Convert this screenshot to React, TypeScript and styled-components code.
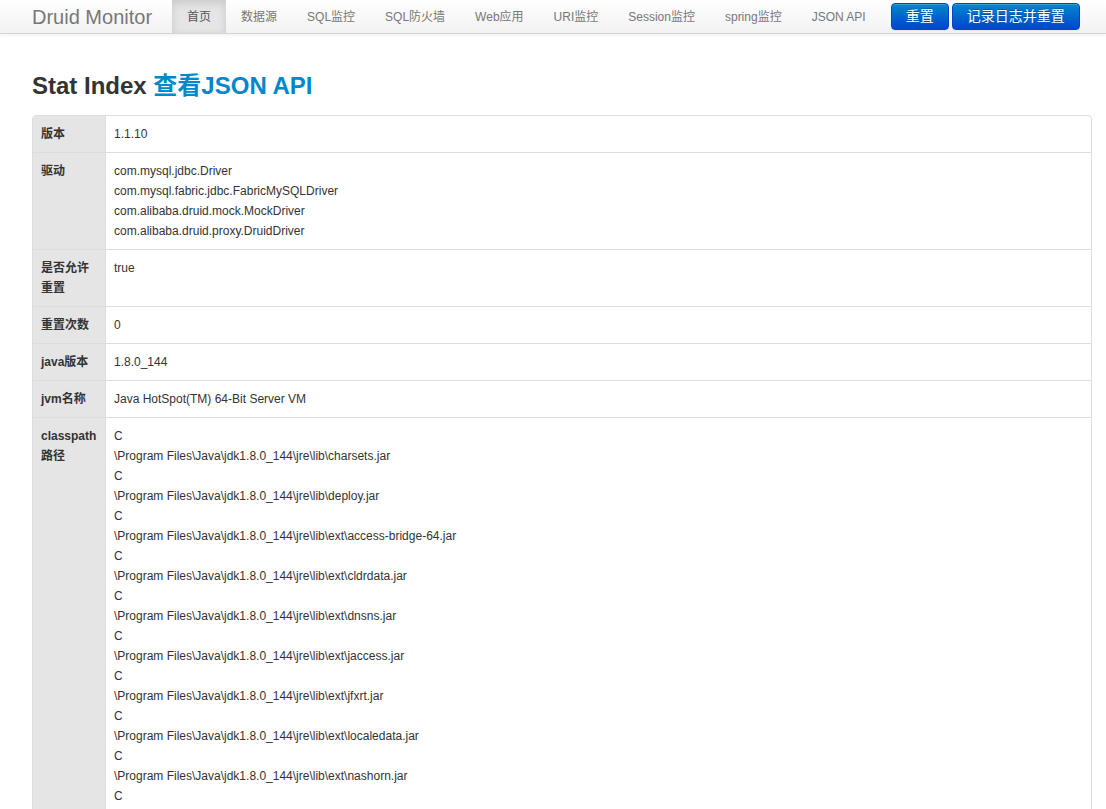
import React from "react";
import styled, { createGlobalStyle } from "styled-components";

const GlobalStyle = createGlobalStyle`
  html, body {
    margin: 0;
    padding: 0;
    background: #fff;
  }

  body {
    font-family: "Liberation Sans", Arial, "Noto Sans CJK SC", sans-serif;
    font-size: 12px;
    line-height: 20px;
    color: #333;
  }
`;

const Navbar = styled.div`
  display: flex;
  align-items: stretch;
  height: 33px;
  padding: 0 26px 0 32px;
  background-image: linear-gradient(to bottom, #ffffff, #f2f2f2);
  border-bottom: 1px solid #d4d4d4;
  box-shadow: 0 1px 4px rgba(0, 0, 0, 0.065);
`;

const Brand = styled.a`
  display: flex;
  align-items: center;
  padding-right: 20px;
  font-size: 20px;
  color: #777;
  text-decoration: none;
  line-height: 20px;
`;

const NavList = styled.ul`
  display: flex;
  list-style: none;
  margin: 0;
  padding: 0;
`;

const NavItem = styled.li<{ active?: boolean }>`
  display: flex;
  align-items: center;
  padding: 0 15px;
  font-size: 12px;
  color: ${(p) => (p.active ? "#555" : "#777")};
  background: ${(p) => (p.active ? "#e5e5e5" : "transparent")};
  box-shadow: ${(p) => (p.active ? "inset 0 3px 8px rgba(0, 0, 0, 0.125)" : "none")};
  cursor: pointer;
`;

const NavActions = styled.div`
  display: flex;
  align-items: flex-start;
  gap: 3px;
  margin-left: 10px;
  padding-top: 3px;
`;

const PrimaryButton = styled.button`
  height: 27px;
  padding: 0 14px;
  font-family: inherit;
  font-size: 14px;
  line-height: 25px;
  color: #fff;
  background-image: linear-gradient(to bottom, #0088cc, #0044cc);
  border: 1px solid #0044cc;
  border-radius: 4px;
  text-shadow: 0 -1px 0 rgba(0, 0, 0, 0.25);
  box-shadow: inset 0 1px 0 rgba(255, 255, 255, 0.2), 0 1px 2px rgba(0, 0, 0, 0.05);
  cursor: pointer;
`;

const Content = styled.div`
  padding: 37px 14px 0 32px;
`;

const Title = styled.h3`
  margin: 0 0 14px;
  font-size: 24px;
  line-height: 30px;
  font-weight: bold;
  color: #333;

  a {
    color: #0088cc;
    text-decoration: none;
  }
`;

const Table = styled.table`
  width: 100%;
  border-collapse: separate;
  border-spacing: 0;
  border: 1px solid #ddd;
  border-radius: 4px;
  overflow: hidden;
`;

const Row = styled.tr`
  & + & > td {
    border-top: 1px solid #ddd;
  }
`;

const Label = styled.td`
  width: 56px;
  padding: 8px;
  vertical-align: top;
  font-weight: bold;
  background: #e5e5e5;
  border-right: 1px solid #ddd;
  word-break: break-all;
`;

const Value = styled.td`
  padding: 8px;
  vertical-align: top;
`;

const Line = styled.div``;

const jdk = "\\Program Files\\Java\\jdk1.8.0_144\\jre\\lib\\";
const jars = [
  "charsets.jar",
  "deploy.jar",
  "ext\\access-bridge-64.jar",
  "ext\\cldrdata.jar",
  "ext\\dnsns.jar",
  "ext\\jaccess.jar",
  "ext\\jfxrt.jar",
  "ext\\localedata.jar",
  "ext\\nashorn.jar",
  "ext\\sunec.jar",
  "ext\\sunjce_provider.jar",
  "ext\\sunmscapi.jar",
  "ext\\sunpkcs11.jar",
  "ext\\zipfs.jar",
  "javaws.jar",
  "jce.jar",
  "jfr.jar",
];

const classpath = jars.flatMap((j) => ["C", jdk + j]);

const rows: { label: string; lines: string[] }[] = [
  { label: "版本", lines: ["1.1.10"] },
  {
    label: "驱动",
    lines: [
      "com.mysql.jdbc.Driver",
      "com.mysql.fabric.jdbc.FabricMySQLDriver",
      "com.alibaba.druid.mock.MockDriver",
      "com.alibaba.druid.proxy.DruidDriver",
    ],
  },
  { label: "是否允许重置", lines: ["true"] },
  { label: "重置次数", lines: ["0"] },
  { label: "java版本", lines: ["1.8.0_144"] },
  { label: "jvm名称", lines: ["Java HotSpot(TM) 64-Bit Server VM"] },
  { label: "classpath路径", lines: classpath },
];

const navItems = [
  "首页",
  "数据源",
  "SQL监控",
  "SQL防火墙",
  "Web应用",
  "URI监控",
  "Session监控",
  "spring监控",
  "JSON API",
];

export default function App() {
  return (
    <>
      <GlobalStyle />
      <Navbar>
        <Brand href="#">Druid Monitor</Brand>
        <NavList>
          {navItems.map((item, i) => (
            <NavItem key={item} active={i === 0}>
              {item}
            </NavItem>
          ))}
        </NavList>
        <NavActions>
          <PrimaryButton>重置</PrimaryButton>
          <PrimaryButton>记录日志并重置</PrimaryButton>
        </NavActions>
      </Navbar>
      <Content>
        <Title>
          Stat Index <a href="#">查看JSON API</a>
        </Title>
        <Table>
          <tbody>
            {rows.map((r) => (
              <Row key={r.label}>
                <Label>{r.label === "classpath路径" ? <>classpath<br />路径</> : r.label}</Label>
                <Value>
                  {r.lines.map((l, i) => (
                    <Line key={i}>{l}</Line>
                  ))}
                </Value>
              </Row>
            ))}
          </tbody>
        </Table>
      </Content>
    </>
  );
}
